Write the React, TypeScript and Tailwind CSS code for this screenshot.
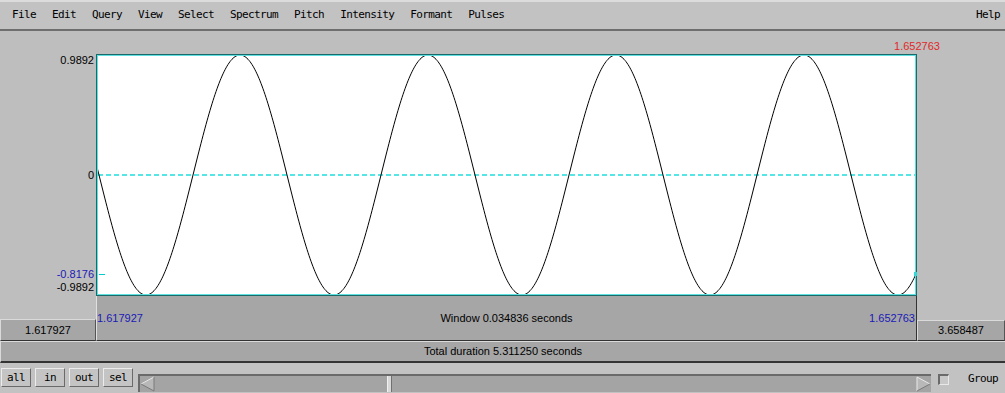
import React from "react";

const mono = { fontFamily: '"DejaVu Sans Mono", "Liberation Mono", monospace' };
const sans = { fontFamily: '"Liberation Sans", Arial, sans-serif' };

function Wave() {
  const pts: string[] = [];
  for (let x = 0; x <= 821; x += 1) {
    const y = 121 + 120 * Math.sin((2 * Math.PI * (x - 3)) / 188);
    pts.push(`${x},${y.toFixed(2)}`);
  }
  return (
    <svg width={821} height={242} viewBox="0 0 821 242" className="block">
      <rect x={0} y={0} width={821} height={242} fill="#ffffff" />
      <line x1={2} y1={121} x2={819} y2={121} stroke="#20dede" strokeWidth={1.6} strokeDasharray="5 3" />
      <line x1={3} y1={220.5} x2={9} y2={220.5} stroke="#00cccc" strokeWidth={1} shapeRendering="crispEdges" />
      <polyline points={pts.join(" ")} fill="none" stroke="#000" strokeWidth={1} />
      <rect x={0.5} y={0.5} width={820} height={241} fill="none" stroke="#1b6a6a" strokeWidth={1} shapeRendering="crispEdges" />
      <rect x={1.5} y={1.5} width={818} height={239} fill="none" stroke="#5fe0e0" strokeWidth={1} shapeRendering="crispEdges" />
      <rect x={818} y={218} width={3} height={4} fill="#30d8d8" />
    </svg>
  );
}

function Btn({ label }: { label: string }) {
  return (
    <div
      className="w-[30px] h-[19px] flex items-center justify-center bg-[#c4c4c4] border-t border-l border-t-[#ececec] border-l-[#ececec] border-b border-r border-b-[#6a6a6a] border-r-[#6a6a6a] text-[11px] tracking-[-0.62px] text-black leading-none"
      style={mono}
    >
      {label}
    </div>
  );
}

export default function App() {
  const menus = ["File", "Edit", "Query", "View", "Select", "Spectrum", "Pitch", "Intensity", "Formant", "Pulses"];
  return (
    <div className="w-[1005px] h-[393px] bg-[#bebebe] flex flex-col overflow-hidden text-black">
      {/* Menu bar */}
      <div
        className="h-[31px] shrink-0 bg-[#c2c2c2] border-t-2 border-t-[#dcdcdc] border-b-2 border-b-[#6e6e6e] flex items-center pl-[12px] pr-[5px] text-[11px] tracking-[-0.62px]"
        style={mono}
      >
        {menus.map((m) => (
          <span key={m} className="mr-[16px]">
            {m}
          </span>
        ))}
        <span className="ml-auto">Help</span>
      </div>

      {/* Main area */}
      <div className="h-[310px] shrink-0 flex" style={sans}>
        {/* Left column */}
        <div className="w-[96px] flex flex-col">
          <div className="h-[23px]" />
          <div className="h-[242px] relative text-[11px] leading-[12px]">
            <span className="absolute right-[2px] top-[0px]">0.9892</span>
            <span className="absolute right-[2px] top-[115px]">0</span>
            <span className="absolute right-[2px] top-[214px] text-[#1a1ab8]">-0.8176</span>
            <span className="absolute right-[2px] top-[227px]">-0.9892</span>
          </div>
          <div className="h-[23px]" />
          <div className="h-[22px] bg-[#a6a6a6] border-t border-t-[#dadada] border-l border-l-[#dadada] border-b border-b-[#333] border-r border-r-[#555] flex items-center justify-center text-[11px]">
            1.617927
          </div>
        </div>

        {/* Center column */}
        <div className="w-[821px] flex flex-col">
          <div className="h-[23px] relative">
            <span className="absolute right-[-26px] w-[52px] text-center top-[9px] text-[11px] leading-[12px] text-[#e02828]">
              1.652763
            </span>
          </div>
          <Wave />
          <div className="h-[45px] bg-[#a6a6a6] border-l border-l-[#e0e0e0] border-b border-b-[#333] border-r border-r-[#333] flex items-center justify-between text-[11px] relative">
            <span className="text-[#1a1ab8] pl-[0px]">1.617927</span>
            <span className="absolute left-0 right-0 text-center">Window 0.034836 seconds</span>
            <span className="text-[#1a1ab8] pr-[1px]">1.652763</span>
          </div>
        </div>

        {/* Right column */}
        <div className="w-[88px] flex flex-col">
          <div className="flex-1" />
          <div className="h-[21px] bg-[#a6a6a6] border-t border-t-[#dadada] border-l border-l-[#dadada] border-b border-b-[#333] border-r border-r-[#555] flex items-center justify-center text-[11px]">
            3.658487
          </div>
        </div>
      </div>

      {/* Total duration bar */}
      <div
        className="h-[22px] shrink-0 bg-[#a6a6a6] border-t border-t-[#dadada] border-l border-l-[#dadada] border-b-2 border-b-[#333] flex items-center justify-center text-[11px]"
        style={sans}
      >
        Total duration 5.311250 seconds
      </div>

      {/* Bottom bar */}
      <div className="h-[30px] shrink-0 bg-[#c2c2c2] flex items-start">
        <div className="flex gap-[4px] ml-[1px] mt-[5px]">
          <Btn label="all" />
          <Btn label="in" />
          <Btn label="out" />
          <Btn label="sel" />
        </div>
        <div className="ml-[5px] mt-[11px] w-[793px] h-[18px] bg-[#a4a4a4] border-t-2 border-t-[#6a6a6a] border-l-2 border-l-[#6a6a6a] flex items-stretch relative">
          <svg width={16} height={16} viewBox="0 0 16 16" className="block">
            <polygon points="14,1 14,15 1,8" fill="#b8b8b8" />
            <polyline points="14,1 1,8" fill="none" stroke="#e8e8e8" strokeWidth={1} />
            <polyline points="1,8 14,15 14,1" fill="none" stroke="#7a7a7a" strokeWidth={1} />
          </svg>
          <div className="absolute left-[247px] top-0 w-[5px] h-[16px] bg-[#d8d8d8] border-r border-r-[#707070] border-l border-l-[#f0f0f0]" />
          <div className="flex-1" />
          <svg width={16} height={16} viewBox="0 0 16 16" className="block">
            <polygon points="2,1 2,15 15,8" fill="#b8b8b8" />
            <polyline points="2,15 2,1 15,8" fill="none" stroke="#e8e8e8" strokeWidth={1} />
            <polyline points="15,8 2,15" fill="none" stroke="#7a7a7a" strokeWidth={1} />
          </svg>
        </div>
        <div className="ml-[7px] mt-[11px] w-[11px] h-[11px] bg-[#c8c8c8] border-t-2 border-l-2 border-t-[#6a6a6a] border-l-[#6a6a6a] border-b border-r border-b-[#e8e8e8] border-r-[#e8e8e8]" />
        <span className="ml-[19px] mt-[10px] text-[11px] tracking-[-0.62px] leading-[12px]" style={mono}>
          Group
        </span>
      </div>
    </div>
  );
}
